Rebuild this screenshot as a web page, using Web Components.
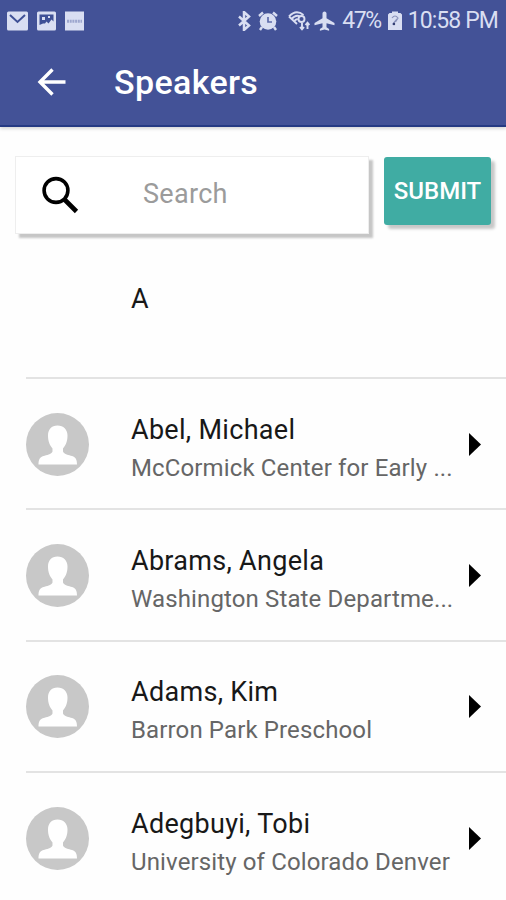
<!DOCTYPE html>
<html lang="en">
<head>
<meta charset="utf-8">
<title>Speakers</title>
<style>
  body {
    margin: 0;
    height: 900px;
    overflow: hidden;
    background-color: #fefefe;
    font-family: Roboto, "Liberation Sans", sans-serif;
  }
</style>
</head>
<body>
<speakers-app></speakers-app>

<script>
/**
 * Create a template element from a string of markup.
 *
 * @param {string} html - The markup.
 * @returns {HTMLTemplateElement} The template.
 */
function createTemplate (html) {
  const template = document.createElement('template')
  template.innerHTML = html
  return template
}

/**
 * Base class, attaches the shadow DOM and appends the template.
 */
class BaseElement extends HTMLElement {
  /**
   * Creates an instance of the current type.
   */
  constructor () {
    super()
    this.attachShadow({ mode: 'open' })
      .appendChild(this.constructor.template.content.cloneNode(true))
  }
}

/**
 * The status bar of the phone.
 */
customElements.define('status-bar', class extends BaseElement {
  static template = createTemplate(`
<style>
  :host {
    display: flex;
    align-items: center;
    justify-content: space-between;
    height: 40px;
    padding: 1px 9px 0 7px;
    box-sizing: border-box;
    color: #d9def2;
    font-size: 23px;
    line-height: 39px;
  }

  div {
    display: flex;
    align-items: center;
  }

  svg {
    display: block;
    fill: currentColor;
    flex: none;
  }

  .left {
    gap: 9px;
  }

  .percent {
    margin-left: 7px;
    letter-spacing: -1.4px;
  }

  .clock {
    margin-left: 6px;
    letter-spacing: -0.9px;
    margin-right: -1px;
  }
</style>
<div class="left">
  <svg width="21" height="20" viewBox="0 0 21 20"><rect y="0.500" width="21" height="19" rx="1.5"/><path d="M3 4l7.500 7L18 4" fill="none" stroke="#3f5096" stroke-width="2"/></svg>
  <svg width="19" height="20" viewBox="0 0 19 20"><rect y="0.500" width="19" height="19" rx="1.5"/><path d="M2.500 3.500h14v7l-2-2-3 4-2-2-1.500 2H6l-3.500 1.500z" fill="#3f5096"/><rect x="5" y="6" width="3" height="3"/><rect x="11" y="5" width="2" height="2"/></svg>
  <svg width="19" height="20" viewBox="0 0 19 20"><rect y="0.500" width="19" height="19"/><path d="M2 9.500h15M2 11h15" stroke="#9da6ce" stroke-width="1.300" stroke-dasharray="2 .7"/></svg>
</div>
<div>
  <svg width="13" height="20" viewBox="0 0 13 20"><path d="M1 5.500l10 9-5 4.500V1l5 4.500-10 9" fill="none" stroke="currentColor" stroke-width="2.500"/></svg>
  <svg width="20" height="20" viewBox="0 0 20 20" style="margin-left:7px"><circle cx="10" cy="10.500" r="8.300"/><path d="M1 5l4-3.500M19 5l-4-3.500M4 16l-2 3M16 16l2 3" stroke="currentColor" stroke-width="2.400"/><path d="M10 6v5h4" fill="none" stroke="#5e6cab" stroke-width="1.700"/></svg>
  <svg width="22" height="20" viewBox="0 0 22 20" style="margin-left:10px"><g fill="none" stroke="currentColor" stroke-width="1.900"><path d="M1 5.500Q8-2 15.500 4M3.500 8Q8 3 12 5.500M6 10.500Q8 7.500 10 8.500M1 5.500l8 7.500"/><circle cx="13.500" cy="8" r="3"/><path d="M14 12v6M12 16l2 2.300 2-2.300M19.500 18v-6M17.500 14l2-2.300 2 2.300"/></g></svg>
  <svg width="21" height="20" viewBox="0 0 21 20" style="margin-left:4px"><path d="M10.500 0.500c1.300 0 2 1 2 2v4.700L20.500 12v2.300l-8-2v4l2.600 1.800v1.600l-4.600-1.200-4.600 1.200v-1.600l2.600-1.800v-4l-8 2V12l8-4.800V2.500c0-1 .7-2 2-2z"/></svg>
  <span class="percent">47%</span>
  <svg width="14" height="20" viewBox="0 0 14 20" style="margin-left:7px"><path d="M4 2V.5h6V2h2.500L14 3.500V19H0V3.500L1.500 2z"/><path d="M4 7q3-4 6 0l-2.500 4M9 8l-4.500 5.500L6 12" fill="none" stroke="#8b93bc" stroke-width="1.200"/><circle cx="6" cy="13" r="1.200" fill="#313c70"/></svg>
  <span class="clock">10:58 PM</span>
</div>
`)
})

/**
 * The app bar with a back arrow and the title in the slot.
 */
customElements.define('app-bar', class extends BaseElement {
  static template = createTemplate(`
<style>
  :host {
    display: flex;
    align-items: center;
    height: 87px;
    padding: 0 0 1px 37px;
    box-sizing: border-box;
    border-bottom: 2px solid #253a83;
    color: #fff;
  }

  h1 {
    margin: 0 0 0 48px;
    font-size: 34px;
    font-weight: 500;
    line-height: 40px;
    letter-spacing: 0.35px;
  }
</style>
<svg width="29" height="28" viewBox="0 0 29 28" fill="none" stroke="#fff" stroke-width="3.400"><path d="M15.500 1.500L3 14l12.500 12.500M3 14h25.500"/></svg>
<h1><slot></slot></h1>
`)
})

/**
 * The search field and the submit button.
 */
customElements.define('search-form', class extends BaseElement {
  static template = createTemplate(`
<style>
  :host {
    display: flex;
    align-items: flex-start;
    gap: 15px;
    padding: 29px 15px 0;
  }

  .field {
    display: flex;
    align-items: center;
    flex: 1;
    height: 78px;
    box-sizing: border-box;
    padding-left: 26px;
    border: 1px solid #eeeeee;
    background-color: #fff;
    box-shadow: 4px 4px 2px #c6c6c6;
    color: #9b9b9b;
    font-size: 27px;
  }

  .field span {
    margin: 0 0 2px 64px;
    letter-spacing: 0.3px;
  }

  button {
    width: 107px;
    height: 68px;
    margin-top: 1px;
    padding: 0;
    border: 0;
    border-radius: 3px;
    background-color: #40aca3;
    box-shadow: 4px 4px 3px #c8c8c8;
    color: #fff;
    font: 500 24px Roboto, "Liberation Sans", sans-serif;
  }
</style>
<div class="field">
  <svg width="37" height="38" viewBox="0 0 37 38" fill="none" stroke="#000"><circle cx="14" cy="14.500" r="11.900" stroke-width="3.600"/><path d="M22.500 23.500L34.500 35.500" stroke-width="4.600"/></svg>
  <span>Search</span>
</div>
<button type="button"><slot></slot></button>
`)
})

/**
 * One speaker in the list, with the slots name and place.
 */
customElements.define('speaker-row', class extends BaseElement {
  static template = createTemplate(`
<style>
  :host {
    display: flex;
    align-items: center;
    height: 131.4px;
    box-sizing: border-box;
    border-top: 2px solid #e3e3e3;
  }

  svg {
    flex: none;
    margin-top: 1px;
  }

  .text {
    flex: 1;
    margin-left: 42px;
    padding-top: 10px;
    white-space: nowrap;
  }

  .name {
    color: #181818;
    font-size: 27px;
    line-height: 38px;
    letter-spacing: 0.3px;
  }

  .place {
    color: #666;
    font-size: 24px;
    line-height: 38px;
    letter-spacing: 0.13px;
  }

  .arrow {
    margin-right: 25px;
  }
</style>
<svg width="63" height="63" viewBox="0 0 63 63"><circle cx="31.500" cy="31.500" r="31.500" fill="#c8c8c8"/><path d="M31.500 12.500c6 0 10 4 10 10 0 6-2 10-4.500 13v3c1 3 6 3.500 9 4.500 4 1.200 5 4 5 8.500H12.500c0-4.500 1-7.300 5-8.500 3-1 8-1.500 9-4.500v-3c-2.500-3-4.500-7-4.500-13 0-6 3.500-10 9.500-10z" fill="#fff"/></svg>
<div class="text">
  <div class="name"><slot name="name"></slot></div>
  <div class="place"><slot name="place"></slot></div>
</div>
<svg class="arrow" width="12" height="23" viewBox="0 0 12 23"><path d="M0 0l12 11.500L0 23z"/></svg>
`)
})

/**
 * The whole page.
 */
customElements.define('speakers-app', class extends BaseElement {
  static template = createTemplate(`
<style>
  :host {
    display: block;
  }

  header {
    background-color: #435297;
    box-shadow: 0 2px 3px #d8d8d8;
  }

  .letter {
    display: flex;
    align-items: center;
    height: 131px;
    padding: 0 0 25px 131px;
    box-sizing: border-box;
    margin-top: 12px;
    color: #181818;
    font-size: 27px;
  }

  .list {
    padding-left: 26px;
  }
</style>
<header>
  <status-bar></status-bar>
  <app-bar>Speakers</app-bar>
</header>
<search-form>SUBMIT</search-form>
<div class="letter">A</div>
<div class="list"></div>
`)

  /**
   * Fill the list with the speakers.
   */
  connectedCallback () {
    const speakers = [
      ['Abel, Michael', 'McCormick Center for Early ...'],
      ['Abrams, Angela', 'Washington State Departme...'],
      ['Adams, Kim', 'Barron Park Preschool'],
      ['Adegbuyi, Tobi', 'University of Colorado Denver']
    ]
    const list = this.shadowRoot.querySelector('.list')
    for (const [name, place] of speakers) {
      const row = document.createElement('speaker-row')
      row.innerHTML = `<span slot="name">${name}</span><span slot="place">${place}</span>`
      list.appendChild(row)
    }
  }
})
</script>
</body>
</html>
